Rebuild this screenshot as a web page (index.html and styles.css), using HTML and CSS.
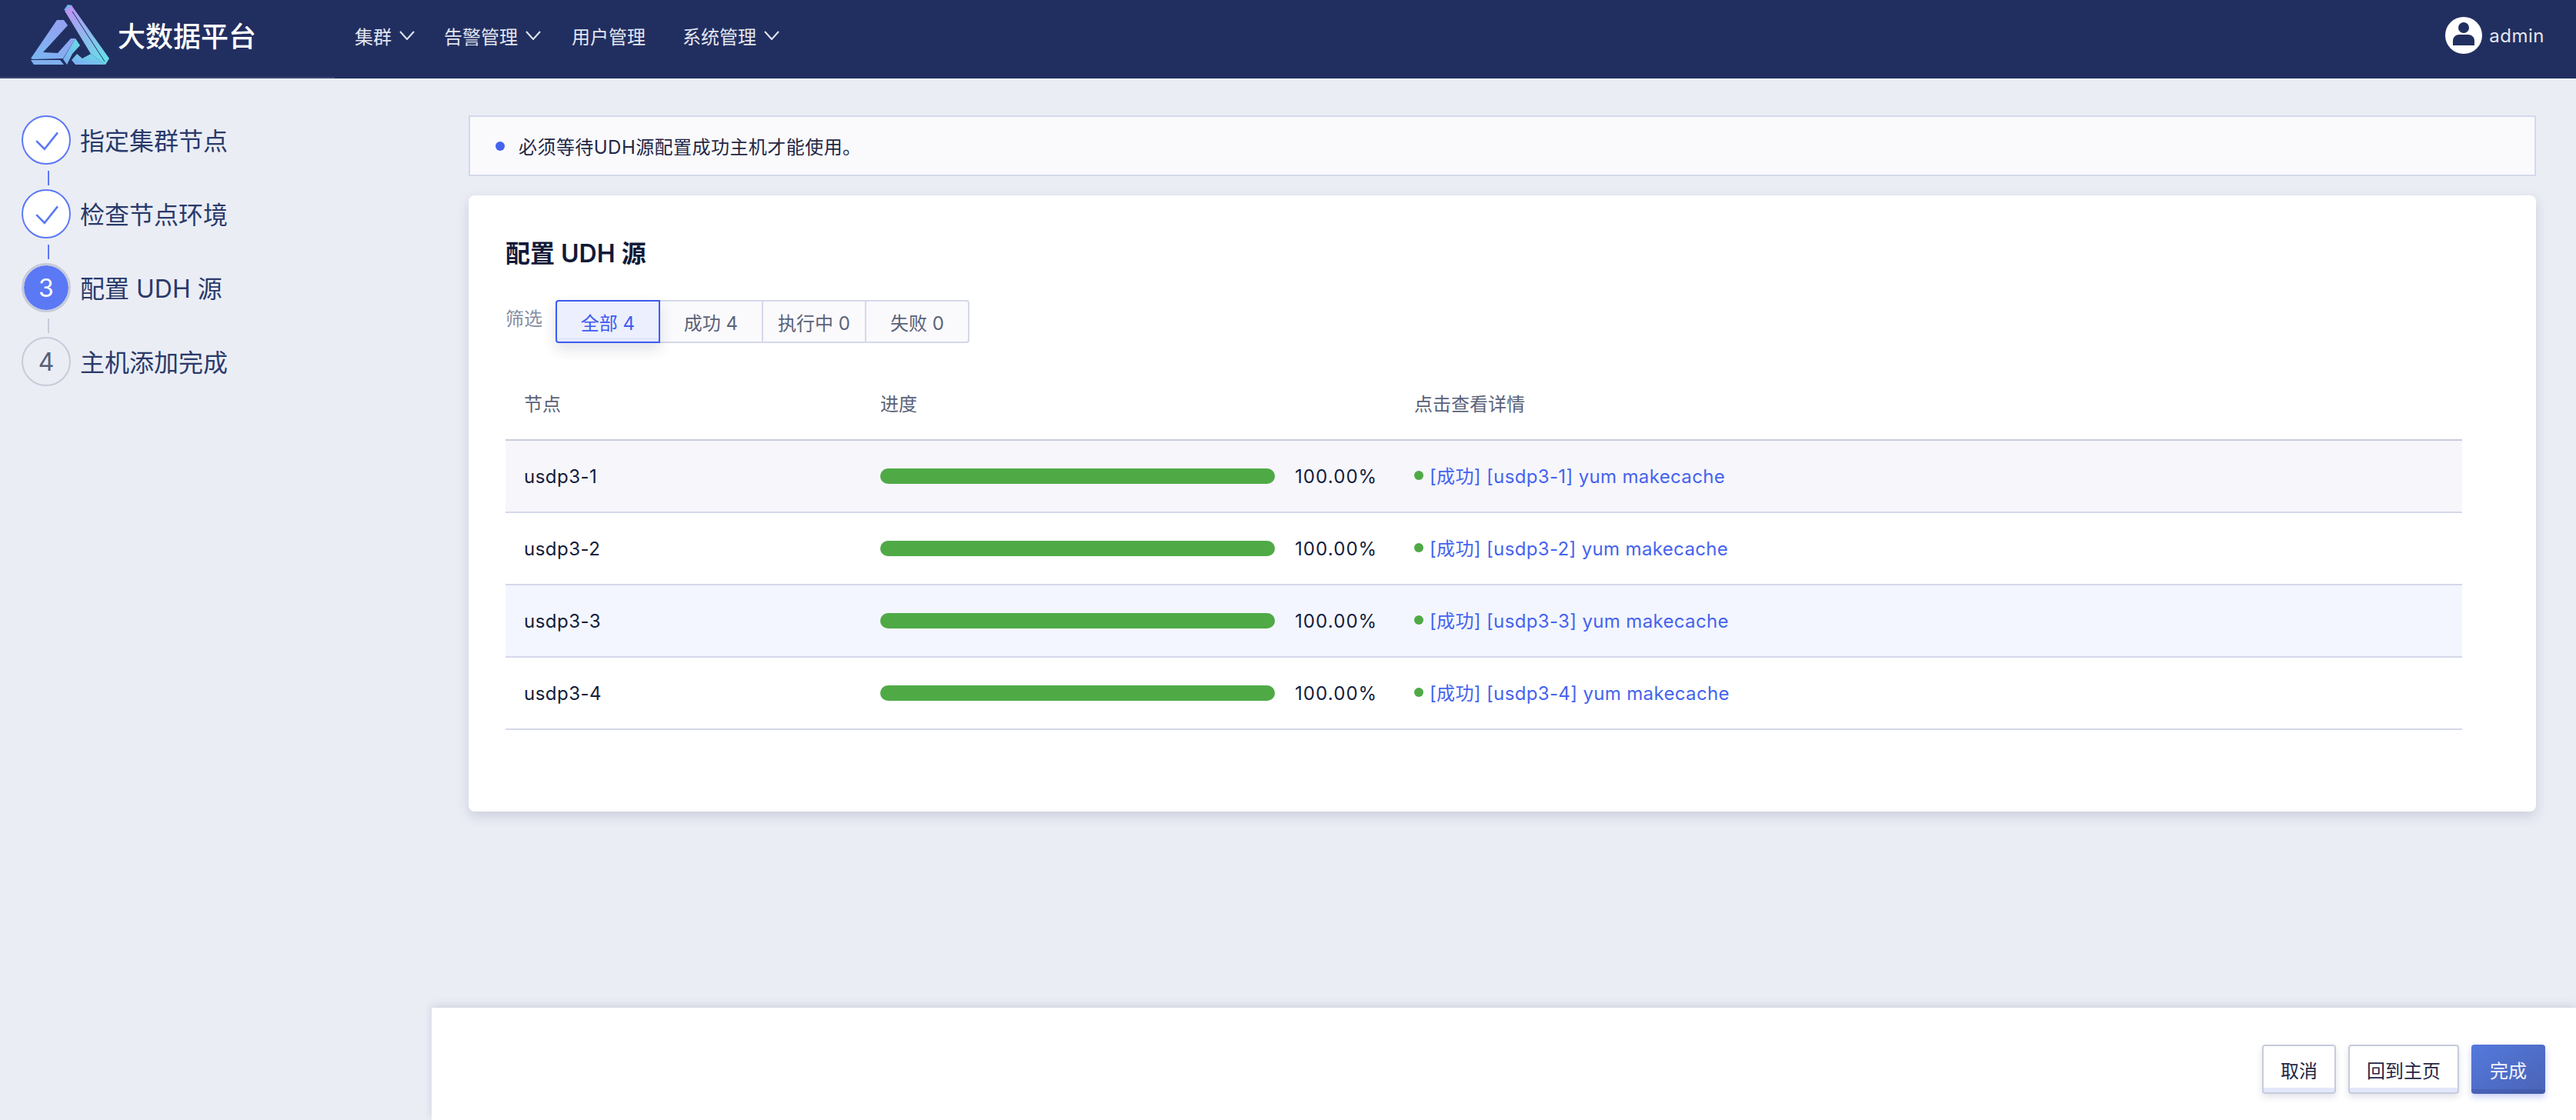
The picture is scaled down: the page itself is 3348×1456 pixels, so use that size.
FILE: index.html
```html
<!DOCTYPE html>
<html lang="zh">
<head>
    <meta charset="UTF-8">
    <meta name="viewport" content="width=device-width, initial-scale=1.0">
    <title>大数据平台</title>
    <link rel="stylesheet" href="styles.css">
</head>
<body>
    <header class="topbar">
        <div class="brand">
            <svg class="brand-logo" viewBox="0 0 130 100">
                <defs>
                    <linearGradient id="logoLeft" x1="0" y1="1" x2="1" y2="0">
                        <stop offset="0" stop-color="#78b8f0"/>
                        <stop offset="1" stop-color="#9a9cf2"/>
                    </linearGradient>
                    <linearGradient id="logoRight" x1="0.1" y1="0" x2="0.8" y2="1">
                        <stop offset="0" stop-color="#bb92f4"/>
                        <stop offset="1" stop-color="#66dfe8"/>
                    </linearGradient>
                    <linearGradient id="logoCore" x1="0" y1="1" x2="1" y2="0">
                        <stop offset="0" stop-color="#7fa9f0"/>
                        <stop offset="1" stop-color="#66dfe8"/>
                    </linearGradient>
                </defs>
                <polygon points="63,13 68,6 74,7 69,13" fill="#6fb3e6"/>
                <polygon points="64,14 73,7 122,76 117,84 98,70" fill="url(#logoRight)"/>
                <path d="M74 15L116 80" fill="none" stroke="#212f60" stroke-width="1"/>
                <polygon points="20,76 54,26 63,26 68,33 36,68 55,69 72,50 78,50 62,76 23,77" fill="url(#logoLeft)"/>
                <polygon points="20,78 58,78 63,84 24,84" fill="#7fb0ee"/>
                <polygon points="62,77 78,50 84,59 74,70 67,84" fill="url(#logoCore)"/>
                <polygon points="73,78 80,70 87,76 98,70 117,84 78,84" fill="url(#logoCore)"/>
            </svg>
            <span class="brand-name">大数据平台</span>
        </div>
        <nav class="nav">
            <a class="nav-item">集群<svg class="chevron" viewBox="0 0 20 12"><path d="M1 1l9 10 9-10"/></svg></a>
            <a class="nav-item">告警管理<svg class="chevron" viewBox="0 0 20 12"><path d="M1 1l9 10 9-10"/></svg></a>
            <a class="nav-item">用户管理</a>
            <a class="nav-item">系统管理<svg class="chevron" viewBox="0 0 20 12"><path d="M1 1l9 10 9-10"/></svg></a>
        </nav>
        <div class="user">
            <svg class="avatar" viewBox="0 0 48 48">
                <circle cx="24" cy="24" r="24" fill="#fff"/>
                <circle cx="24" cy="14" r="7" fill="#212f60"/>
                <path d="M10 37V31c0-5 4-8 8-8h12c4 0 8 3 8 8v6z" fill="#212f60"/>
            </svg>
            <span>admin</span>
        </div>
    </header>
    <div class="topbar-edge"></div>

    <div class="layout">
        <aside class="steps">
            <div class="step done">
                <span class="step-mark"><svg viewBox="0 0 30 26"><path d="M3 14l10 10L29 4"/></svg></span>
                <span class="step-label">指定集群节点</span>
            </div>
            <div class="step-line on"></div>
            <div class="step done">
                <span class="step-mark"><svg viewBox="0 0 30 26"><path d="M3 14l10 10L29 4"/></svg></span>
                <span class="step-label">检查节点环境</span>
            </div>
            <div class="step-line on"></div>
            <div class="step current">
                <span class="step-mark">3</span>
                <span class="step-label">配置 UDH 源</span>
            </div>
            <div class="step-line"></div>
            <div class="step">
                <span class="step-mark">4</span>
                <span class="step-label">主机添加完成</span>
            </div>
        </aside>

        <main class="content">
            <div class="alert"><i class="alert-dot"></i>必须等待UDH源配置成功主机才能使用。</div>
            <section class="card">
                <h2 class="card-title">配置 UDH 源</h2>
                <div class="filter">
                    <span class="filter-label">筛选</span>
                    <div class="filter-group">
                        <button class="filter-btn active">全部 4</button>
                        <button class="filter-btn">成功 4</button>
                        <button class="filter-btn">执行中 0</button>
                        <button class="filter-btn">失败 0</button>
                    </div>
                </div>
                <table class="nodes">
                    <thead>
                        <tr>
                            <th class="col-node">节点</th>
                            <th class="col-progress">进度</th>
                            <th>点击查看详情</th>
                        </tr>
                    </thead>
                    <tbody>
                        <tr class="row-hover">
                            <td>usdp3-1</td>
                            <td><div class="progress"><div class="progress-bar"></div><span class="progress-num">100.00%</span></div></td>
                            <td><a class="detail"><i class="detail-dot"></i>[成功] [usdp3-1] yum makecache</a></td>
                        </tr>
                        <tr>
                            <td>usdp3-2</td>
                            <td><div class="progress"><div class="progress-bar"></div><span class="progress-num">100.00%</span></div></td>
                            <td><a class="detail"><i class="detail-dot"></i>[成功] [usdp3-2] yum makecache</a></td>
                        </tr>
                        <tr class="row-selected">
                            <td>usdp3-3</td>
                            <td><div class="progress"><div class="progress-bar"></div><span class="progress-num">100.00%</span></div></td>
                            <td><a class="detail"><i class="detail-dot"></i>[成功] [usdp3-3] yum makecache</a></td>
                        </tr>
                        <tr>
                            <td>usdp3-4</td>
                            <td><div class="progress"><div class="progress-bar"></div><span class="progress-num">100.00%</span></div></td>
                            <td><a class="detail"><i class="detail-dot"></i>[成功] [usdp3-4] yum makecache</a></td>
                        </tr>
                    </tbody>
                </table>
            </section>
        </main>
    </div>

    <footer class="actions">
        <button class="btn">取消</button>
        <button class="btn">回到主页</button>
        <button class="btn primary">完成</button>
    </footer>
</body>
</html>
```

FILE: styles.css
```css
* {
    box-sizing: border-box;
}
html, body {
    height: 100%;
}
body {
    margin: 0;
    height: 1456px;
    display: flex;
    flex-direction: column;
    overflow: hidden;
    background-color: #ebedf5;
    color: #141d3c;
    font-family: Inter, "Noto Sans CJK SC", sans-serif;
    font-size: 24px;
}

/* header */
.topbar {
    height: 100px;
    flex: none;
    display: flex;
    align-items: center;
    background-color: #212f60;
    color: #e3e6f0;
}
.topbar-edge {
    height: 2px;
    flex: none;
    background: linear-gradient(to right, #3a4775 435px, #212f60 435px);
}
.brand {
    display: flex;
    align-items: center;
    width: 461px;
    padding-left: 20px;
}
.brand-logo {
    width: 130px;
    height: 100px;
}
.brand-name {
    margin-left: 3px;
    padding-bottom: 10px;
    font-size: 36px;
    font-weight: 500;
    color: #fff;
}
.nav {
    display: flex;
    gap: 48px;
    padding-bottom: 8px;
}
.nav-item {
    display: flex;
    align-items: center;
    gap: 10px;
}
.nav-item:nth-child(2) {
    margin-left: -10px;
}
.nav-item:nth-child(3) {
    margin-left: -8px;
}
.chevron {
    width: 20px;
    height: 12px;
    fill: none;
    stroke: #e3e6f0;
    stroke-width: 2;
}
.user {
    margin-left: auto;
    margin-right: 41px;
    display: flex;
    align-items: center;
    gap: 9px;
    padding-bottom: 8px;
    letter-spacing: 0.5px;
}
.avatar {
    width: 48px;
    height: 48px;
}

/* layout */
.layout {
    flex: 1;
    display: flex;
    min-height: 0;
}

/* steps */
.steps {
    width: 561px;
    flex: none;
    padding: 48px 0 0 28px;
}
.step {
    display: flex;
    align-items: center;
    gap: 12px;
    height: 64px;
    font-size: 32px;
    color: #2a3a6a;
}
.step-label {
    padding-bottom: 2px;
}
.step-mark {
    width: 64px;
    height: 64px;
    flex: none;
    display: flex;
    align-items: center;
    justify-content: center;
    border: 2px solid #c6cbd9;
    border-radius: 50%;
    color: #566078;
    font-size: 32px;
}
.step-mark svg {
    width: 32px;
    height: 28px;
    fill: none;
    stroke: #5b78f5;
    stroke-width: 2.4;
}
.done .step-mark {
    border-color: #5b78f5;
    background-color: #fff;
}
.current .step-mark {
    background-color: #5b78f5;
    background-clip: padding-box;
    border-width: 3px;
    color: #fff;
}
.step-line {
    width: 2px;
    height: 19px;
    margin: 8px 0 5px 34px;
    background-color: #c6cbd9;
}
.step-line.on {
    background-color: #5b78f5;
}

/* content */
.content {
    flex: 1;
    padding: 48px 52px 0 48px;
}
.alert {
    height: 79px;
    display: flex;
    align-items: center;
    padding-left: 33px;
    border: 2px solid #d5d8ea;
    background-color: #fafafd;
    color: #1f2745;
    letter-spacing: 0.45px;
}
.alert-dot {
    width: 12px;
    height: 12px;
    margin-right: 18px;
    border-radius: 50%;
    background-color: #4563ee;
}
.card {
    height: 801px;
    margin-top: 25px;
    padding: 48px 96px 0 48px;
    border-radius: 8px;
    background-color: #fff;
    box-shadow: 0 6px 16px rgba(40, 50, 90, 0.16);
}
.card-title {
    margin: 0;
    height: 56px;
    line-height: 56px;
    font-size: 32px;
    font-weight: 600;
    color: #111a38;
}
.filter {
    display: flex;
    margin-top: 32px;
    height: 56px;
}
.filter-label {
    width: 65px;
    color: #878da0;
    line-height: 50px;
}
.filter-group {
    display: flex;
}
.filter-btn {
    width: 136px;
    height: 56px;
    margin-left: -2px;
    border: 2px solid #d5d8ea;
    background-color: #fafafd;
    color: #5a6278;
    font: inherit;
}
.filter-btn:first-child {
    margin-left: 0;
    border-radius: 4px 0 0 4px;
}
.filter-btn:last-child {
    border-radius: 0 4px 4px 0;
}
.filter-btn.active {
    position: relative;
    border-color: #3d5bf0;
    background: linear-gradient(to bottom, #eceffe 90%, #e3e7fd 90%);
    color: #3d5bf0;
    box-shadow: 0 8px 18px rgba(40, 50, 90, 0.14);
}
.nodes {
    width: 100%;
    margin-top: 32px;
    border-collapse: collapse;
    table-layout: fixed;
}
.nodes th {
    height: 94px;
    padding: 0 0 2px 25px;
    text-align: left;
    font-weight: 400;
    color: #5a6278;
    border-bottom: 2px solid #c8cbdc;
}
.col-node {
    width: 462px;
}
.col-progress {
    width: 694px;
}
.nodes td {
    height: 94px;
    padding: 0 0 0 25px;
    border-bottom: 2px solid #d5d8ea;
    letter-spacing: 0.5px;
}
.nodes th:first-child, .nodes td:first-child {
    padding-left: 24px;
}
.row-hover {
    background-color: #f6f6fb;
}
.row-selected {
    background-color: #f3f6fe;
}
.progress {
    display: flex;
    align-items: center;
    gap: 26px;
}
.progress-bar {
    width: 513px;
    height: 20px;
    border-radius: 10px;
    background-color: #4faa46;
}
.progress-num {
    letter-spacing: 1.1px;
}
.detail {
    display: flex;
    align-items: center;
    padding-bottom: 3px;
    color: #4563ee;
    letter-spacing: 0.35px;
}
.detail-dot {
    width: 12px;
    height: 12px;
    margin-right: 8px;
    border-radius: 50%;
    background-color: #4faa46;
}

/* footer */
.actions {
    height: 146px;
    flex: none;
    margin-left: 561px;
    display: flex;
    justify-content: flex-end;
    align-items: flex-start;
    gap: 16px;
    padding: 48px 40px 0 0;
    background-color: #fff;
    box-shadow: 0 -3px 10px rgba(40, 50, 90, 0.14);
}
.btn {
    height: 64px;
    padding: 0 22px;
    border: 2px solid #c6cbdc;
    border-radius: 4px;
    background: linear-gradient(to bottom, #fff 90%, #e3e7fa 90%);
    color: #1f2745;
    font: inherit;
    box-shadow: 0 4px 8px rgba(40, 50, 90, 0.14);
}
.btn.primary {
    border: none;
    padding: 0 24px;
    background: linear-gradient(to bottom, transparent 91%, rgba(40, 50, 110, 0.2) 91%), linear-gradient(to bottom right, #5479dc, #4a63b6);
    color: #f2f4fd;
    box-shadow: 0 4px 8px rgba(70, 90, 230, 0.3);
}
```
